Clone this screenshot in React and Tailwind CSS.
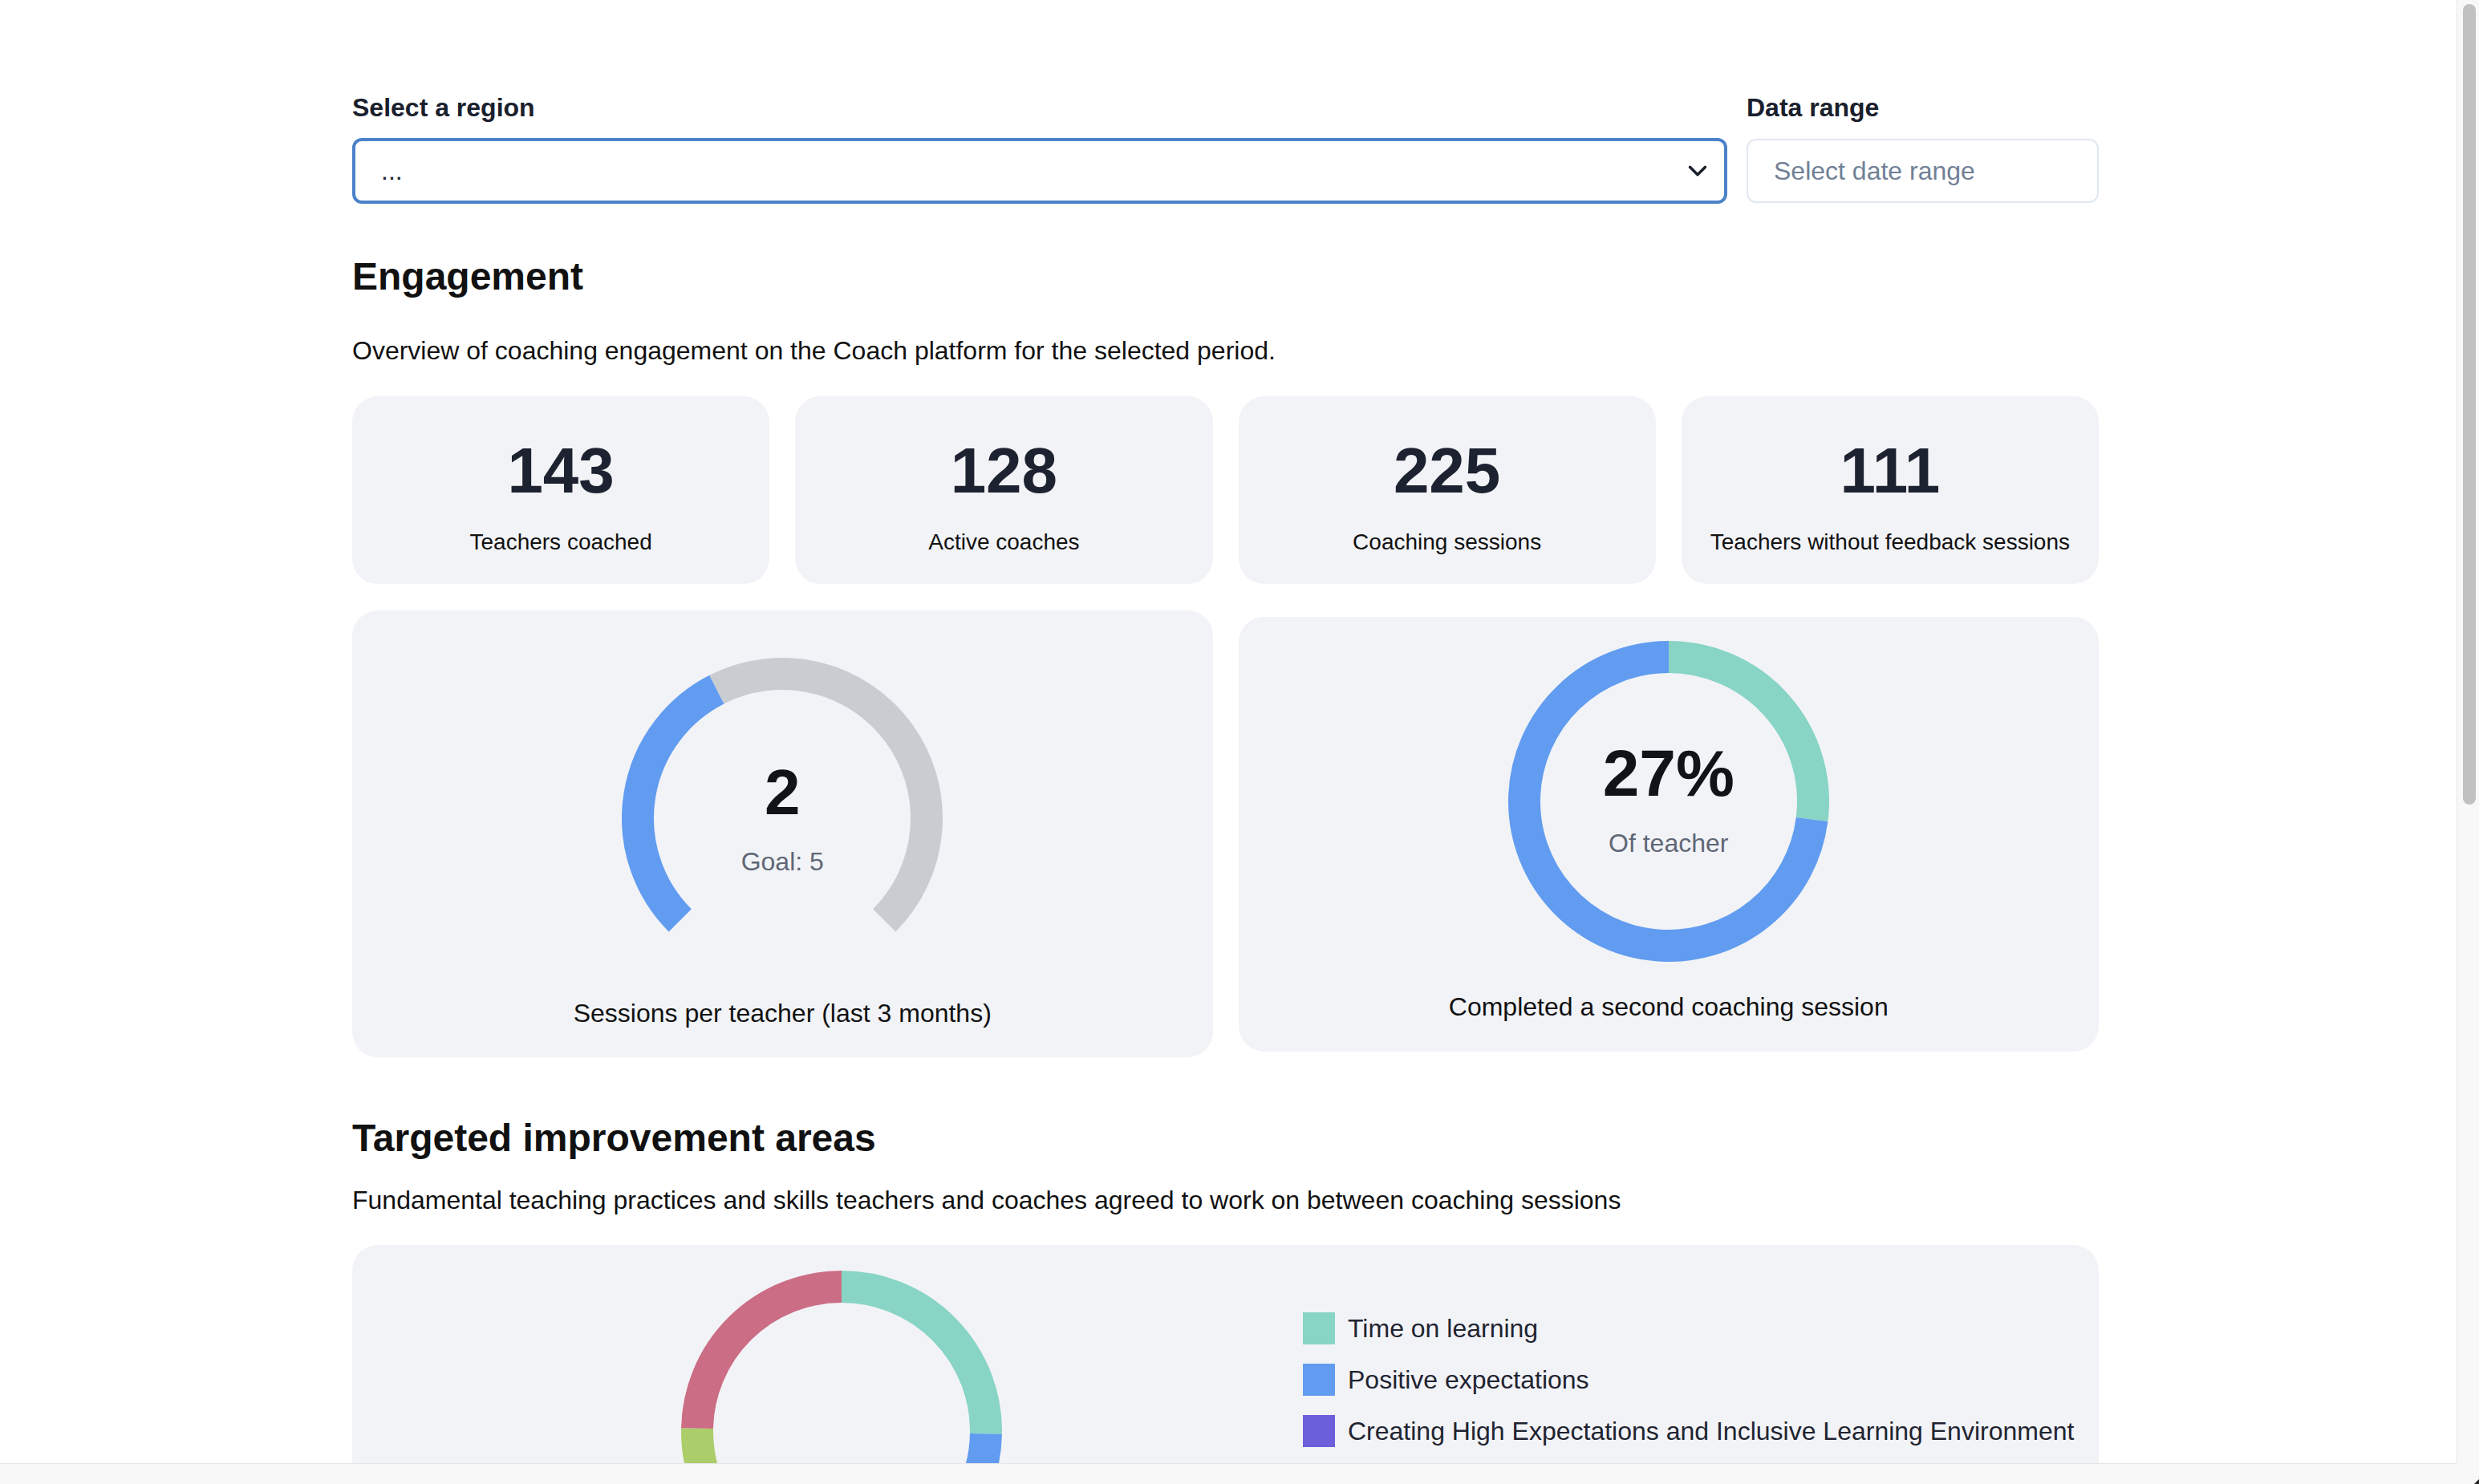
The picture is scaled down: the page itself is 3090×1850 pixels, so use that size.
import React from 'react';
import { ChevronDown } from 'lucide-react';

const polar = (cx, cy, r, deg) => {
  const a = (deg * Math.PI) / 180;
  return [cx + r * Math.sin(a), cy - r * Math.cos(a)];
};

const arc = (cx, cy, r, from, to) => {
  const [x0, y0] = polar(cx, cy, r, from);
  const [x1, y1] = polar(cx, cy, r, to);
  const large = to - from > 180 ? 1 : 0;
  return `M ${x0} ${y0} A ${r} ${r} 0 ${large} 1 ${x1} ${y1}`;
};

const stats = [
  { value: 143, label: 'Teachers coached' },
  { value: 128, label: 'Active coaches' },
  { value: 225, label: 'Coaching sessions' },
  { value: 111, label: 'Teachers without feedback sessions' },
];

// segments of the improvement-areas donut, clockwise from the top
const segments = [
  { color: '#88d4c5', pct: 25.3 },
  { color: '#619cf0', pct: 16 },
  { color: '#6b5fdb', pct: 18 },
  { color: '#abcd6a', pct: 16 },
  { color: '#cb6d84', pct: 24.7 },
];

const legend = [
  { label: 'Time on learning', color: '#88d4c5' },
  { label: 'Positive expectations', color: '#619cf0' },
  { label: 'Creating High Expectations and Inclusive Learning Environment', color: '#6b5fdb' },
];

function Gauge({ value, goal }) {
  const start = -135;
  const sweep = 270;
  const mid = start + (sweep * value) / goal;
  return (
    <div className="relative w-[400px] h-[400px]">
      <svg width="400" height="400" viewBox="0 0 400 400">
        <path d={arc(200, 200, 180, mid, start + sweep)} fill="none" stroke="#c9ccd1" strokeWidth="40" />
        <path d={arc(200, 200, 180, start, mid)} fill="none" stroke="#619cf0" strokeWidth="40" />
      </svg>
      <div className="absolute inset-0 flex flex-col items-center justify-center gap-[22px] pt-[6px]">
        <div className="text-[80px] leading-[80px] font-bold text-[#111318]">{value}</div>
        <div className="text-[32px] leading-[48px] text-[#5f6776]">Goal: {goal}</div>
      </div>
    </div>
  );
}

function Donut({ pct }) {
  const split = (360 * pct) / 100;
  return (
    <div className="relative w-[400px] h-[400px]">
      <svg width="400" height="400" viewBox="0 0 400 400">
        <path d={arc(200, 200, 180, 0, split)} fill="none" stroke="#88d4c5" strokeWidth="40" />
        <path d={arc(200, 200, 180, split, 360)} fill="none" stroke="#619cf0" strokeWidth="40" />
      </svg>
      <div className="absolute inset-0 flex flex-col items-center justify-center gap-[23px] pt-[2px]">
        <div className="text-[82px] leading-[80px] font-bold text-[#111318]">{pct}%</div>
        <div className="text-[32px] leading-[48px] text-[#5f6776]">Of teacher</div>
      </div>
    </div>
  );
}

function AreasDonut() {
  let acc = 0;
  return (
    <svg width="400" height="400" viewBox="0 0 400 400" className="shrink-0">
      {segments.map((s, i) => {
        const from = acc;
        acc += (360 * s.pct) / 100;
        return <path key={i} d={arc(200, 200, 180, from, Math.min(acc, 359.99))} fill="none" stroke={s.color} strokeWidth="40" />;
      })}
    </svg>
  );
}

export default function App() {
  return (
    <div className="h-screen flex flex-col bg-white font-['Liberation_Sans',Arial,sans-serif] text-[#111111]">
      <div className="flex flex-1 min-h-0">
        <main className="flex-1 min-w-0 overflow-hidden pr-[7px]">
          <div className="mx-auto w-[2177px] pt-[110px]">
            <div className="flex items-start gap-6">
              <div className="flex-1">
                <div className="text-[32px] leading-[48px] font-bold text-[#1a202c] mb-[14px]">Select a region</div>
                <div className="h-[82px] rounded-[12px] border-4 border-[#4b82c9] flex items-center justify-between pl-[32px] pr-[14px]">
                  <span className="text-[32px] text-[#1a202c]">...</span>
                  <ChevronDown size={38} strokeWidth={2.2} color="#1a202c" />
                </div>
              </div>
              <div className="w-[439px]">
                <div className="text-[32px] leading-[48px] font-bold text-[#1a202c] mb-[15px]">Data range</div>
                <div className="h-[80px] rounded-[12px] border-2 border-[#e2e8f0] flex items-center px-[32px]">
                  <span className="text-[32px] text-[#718096]">Select date range</span>
                </div>
              </div>
            </div>

            <h2 className="mt-[59px] text-[48px] leading-[64px] font-bold">Engagement</h2>
            <p className="mt-[36px] text-[32px] leading-[48px]">Overview of coaching engagement on the Coach platform for the selected period.</p>

            <div className="mt-[33px] grid grid-cols-4 gap-8">
              {stats.map((s) => (
                <div key={s.label} className="h-[234px] rounded-[32px] bg-[#f2f3f7] flex flex-col items-center pt-[53px]">
                  <div className="text-[80px] leading-[80px] font-bold text-[#1d2230]">{s.value}</div>
                  <div className="mt-[29px] text-[28px] leading-[40px]">{s.label}</div>
                </div>
              ))}
            </div>

            <div className="mt-[33px] grid grid-cols-2 gap-8 items-center">
              <div className="rounded-[32px] bg-[#f2f3f7] flex flex-col items-center pt-[59px] pb-[31px]">
                <Gauge value={2} goal={5} />
                <div className="mt-[19px] text-[32px] leading-[48px]">Sessions per teacher (last 3 months)</div>
              </div>
              <div className="rounded-[32px] bg-[#f2f3f7] flex flex-col items-center pt-[30px] pb-[32px]">
                <Donut pct={27} />
                <div className="mt-[32px] text-[32px] leading-[48px]">Completed a second coaching session</div>
              </div>
            </div>

            <h2 className="mt-[69px] text-[48px] leading-[64px] font-bold">Targeted improvement areas</h2>
            <p className="mt-[21px] text-[32px] leading-[48px]">Fundamental teaching practices and skills teachers and coaches agreed to work on between coaching sessions</p>

            <div className="mt-8 rounded-[32px] bg-[#f2f3f7] flex items-start py-8 pl-[410px]">
              <AreasDonut />
              <div className="ml-[375px] mt-[48px] flex flex-col gap-4">
                {legend.map((a) => (
                  <div key={a.label} className="flex items-center gap-4">
                    <span className="w-10 h-10 shrink-0" style={{ backgroundColor: a.color }} />
                    <span className="text-[32px] leading-[48px] text-[#1f2430]">{a.label}</span>
                  </div>
                ))}
              </div>
            </div>
          </div>
        </main>
        <div className="w-[28px] shrink-0 border-l border-[#e6e6e6] bg-[#f8f8f8] pt-[5px] pl-[7px]">
          <div className="w-4 h-[998px] rounded-full bg-[#c1c1c1]" />
        </div>
      </div>
      <div className="h-[26px] shrink-0 flex">
        <div className="flex-1 border-t border-[#e6e6e6] bg-[#f8f8f8]" />
        <div className="w-[28px] bg-[#f8f8f8] flex items-end justify-end">
          <svg width="6" height="6" viewBox="0 0 6 6">
            <path d="M6 0 L6 6 L0 6 Z" fill="#222" />
          </svg>
        </div>
      </div>
    </div>
  );
}
